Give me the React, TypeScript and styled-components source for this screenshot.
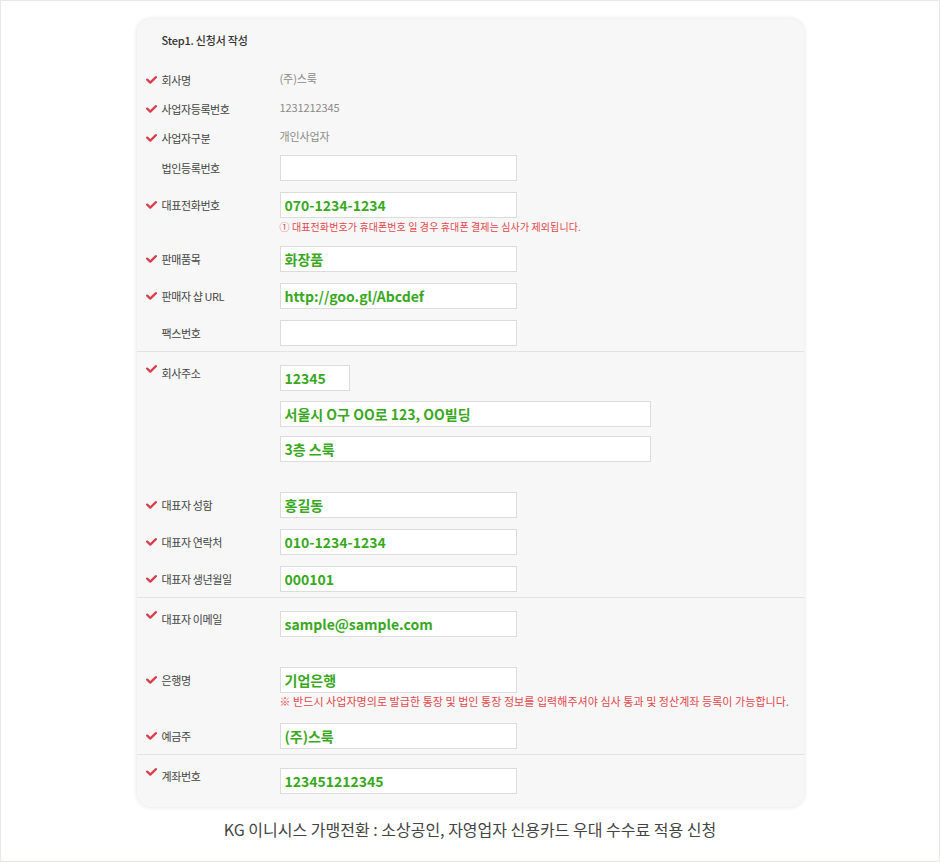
import styled, { createGlobalStyle } from 'styled-components'

const GlobalStyle = createGlobalStyle`
  html, body {
    margin: 0;
    padding: 0;
    background: #fff;
  }
  body {
    font-family: 'Noto Sans CJK KR', 'Noto Sans', sans-serif;
  }
`

const Page = styled.div`
  box-sizing: border-box;
  width: 940px;
  height: 862px;
  border: 1px solid #efe5e5;
  padding-top: 18px;
  background: #fff;
`

const Card = styled.div`
  width: 667px;
  margin: 0 auto;
  background: #f7f7f7;
  border-radius: 14px;
  box-shadow: 0 0 5px rgba(0, 0, 0, 0.12);
  overflow: hidden;
`

const Section = styled.div<{ $last?: boolean }>`
  display: flex;
  flex-direction: column;
  padding: 13px 0 ${(p) => (p.$last ? 13 : 5)}px;
  border-bottom: ${(p) => (p.$last ? 'none' : '1px solid #e3e3e3')};
`

const Title = styled.div`
  padding-left: 25px;
  font-size: 11px;
  line-height: 16px;
  font-weight: 500;
  color: #333;
  letter-spacing: -0.2px;
`

const Row = styled.div<{ $mt: number }>`
  display: flex;
  align-items: flex-start;
  margin-top: ${(p) => p.$mt}px;
`

const Label = styled.div<{ $top?: boolean }>`
  box-sizing: border-box;
  width: 143px;
  flex-shrink: 0;
  display: flex;
  align-items: ${(p) => (p.$top ? 'flex-start' : 'center')};
  gap: 5px;
  height: ${(p) => (p.$top ? 16 : 26)}px;
  padding-left: 9px;
  font-size: 11px;
  line-height: 16px;
  color: #444;
  letter-spacing: -0.4px;
  white-space: nowrap;
`

const CheckMark = styled.svg<{ $hidden?: boolean }>`
  flex-shrink: 0;
  width: 11px;
  height: 8px;
  visibility: ${(p) => (p.$hidden ? 'hidden' : 'visible')};
`

const Field = styled.div`
  display: flex;
  flex-direction: column;
`

const StaticValue = styled.div`
  box-sizing: border-box;
  height: 26px;
  display: flex;
  align-items: center;
  padding-bottom: 4px;
  font-size: 11px;
  color: #8a8a8a;
  letter-spacing: -0.1px;
`

const Input = styled.input<{ $w?: number; $mt?: number }>`
  box-sizing: border-box;
  display: block;
  width: ${(p) => p.$w ?? 237}px;
  height: 26px;
  margin: ${(p) => p.$mt ?? 0}px 0 0;
  padding: 0 4px;
  border: 1px solid #dcdcdc;
  border-radius: 0;
  background: #fff;
  outline: none;
  font-family: 'Noto Sans CJK KR', 'Noto Sans', sans-serif;
  font-size: 14px;
  font-weight: 700;
  color: #3aa81e;
`

const Note = styled.div<{ $mt: number; $size: number; $ls: number }>`
  margin-top: ${(p) => p.$mt}px;
  font-size: ${(p) => p.$size}px;
  line-height: 14px;
  letter-spacing: ${(p) => p.$ls}px;
  color: #e2474d;
  white-space: nowrap;
`

const Footer = styled.div`
  margin-top: 12px;
  text-align: center;
  font-size: 16px;
  line-height: 20px;
  color: #444;
`

const Check = ({ hidden }: { hidden?: boolean }) => (
  <CheckMark $hidden={hidden} viewBox="0 0 11 8">
    <path
      d="M1.2 3.6 L4.3 6.6 L9.9 1.2"
      fill="none"
      stroke="#d8404d"
      strokeWidth="2.3"
      strokeLinecap="round"
      strokeLinejoin="round"
    />
  </CheckMark>
)

interface FieldLabelProps {
  text: string
  required?: boolean
  top?: boolean
}

const FieldLabel = ({ text, required = true, top }: FieldLabelProps) => (
  <Label $top={top}>
    <Check hidden={!required} />
    <span>{text}</span>
  </Label>
)

const App = () => {
  return (
    <>
      <GlobalStyle />
      <Page>
        <Card>
          <Section>
            <Title>Step1. 신청서 작성</Title>
            <Row $mt={19}>
              <FieldLabel text="회사명" />
              <StaticValue>(주)스룩</StaticValue>
            </Row>
            <Row $mt={3}>
              <FieldLabel text="사업자등록번호" />
              <StaticValue>1231212345</StaticValue>
            </Row>
            <Row $mt={3}>
              <FieldLabel text="사업자구분" />
              <StaticValue>개인사업자</StaticValue>
            </Row>
            <Row $mt={4}>
              <FieldLabel text="법인등록번호" required={false} />
              <Input readOnly defaultValue="" />
            </Row>
            <Row $mt={11}>
              <FieldLabel text="대표전화번호" />
              <Field>
                <Input readOnly defaultValue="070-1234-1234" />
                <Note $mt={2} $size={10} $ls={0.1}>
                  ① 대표전화번호가 휴대폰번호 일 경우 휴대폰 결제는 심사가 제외됩니다.
                </Note>
              </Field>
            </Row>
            <Row $mt={12}>
              <FieldLabel text="판매품목" />
              <Input readOnly defaultValue="화장품" />
            </Row>
            <Row $mt={11}>
              <FieldLabel text="판매자 샵 URL" />
              <Input readOnly defaultValue="http://goo.gl/Abcdef" />
            </Row>
            <Row $mt={11}>
              <FieldLabel text="팩스번호" required={false} />
              <Input readOnly defaultValue="" />
            </Row>
          </Section>

          <Section>
            <Row $mt={0}>
              <FieldLabel text="회사주소" top />
              <Field>
                <Input readOnly $w={70} defaultValue="12345" />
                <Input readOnly $w={371} $mt={10} defaultValue="서울시 O구 OO로 123, OO빌딩" />
                <Input readOnly $w={371} $mt={9} defaultValue="3층 스룩" />
              </Field>
            </Row>
            <Row $mt={30}>
              <FieldLabel text="대표자 성함" />
              <Input readOnly defaultValue="홍길동" />
            </Row>
            <Row $mt={11}>
              <FieldLabel text="대표자 연락처" />
              <Input readOnly defaultValue="010-1234-1234" />
            </Row>
            <Row $mt={11}>
              <FieldLabel text="대표자 생년월일" />
              <Input readOnly defaultValue="000101" />
            </Row>
          </Section>

          <Section>
            <Row $mt={0}>
              <FieldLabel text="대표자 이메일" top />
              <Input readOnly defaultValue="sample@sample.com" />
            </Row>
            <Row $mt={30}>
              <FieldLabel text="은행명" />
              <Field>
                <Input readOnly defaultValue="기업은행" />
                <Note $mt={1} $size={11} $ls={0.05}>
                  ※ 반드시 사업자명의로 발급한 통장 및 법인 통장 정보를 입력해주셔야 심사 통과 및 정산계좌 등록이 가능합니다.
                </Note>
              </Field>
            </Row>
            <Row $mt={15}>
              <FieldLabel text="예금주" />
              <Input readOnly defaultValue="(주)스룩" />
            </Row>
          </Section>

          <Section $last>
            <Row $mt={0}>
              <FieldLabel text="계좌번호" top />
              <Input readOnly defaultValue="123451212345" />
            </Row>
          </Section>
        </Card>
        <Footer>KG 이니시스 가맹전환 : 소상공인, 자영업자 신용카드 우대 수수료 적용 신청</Footer>
      </Page>
    </>
  )
}

export default App
